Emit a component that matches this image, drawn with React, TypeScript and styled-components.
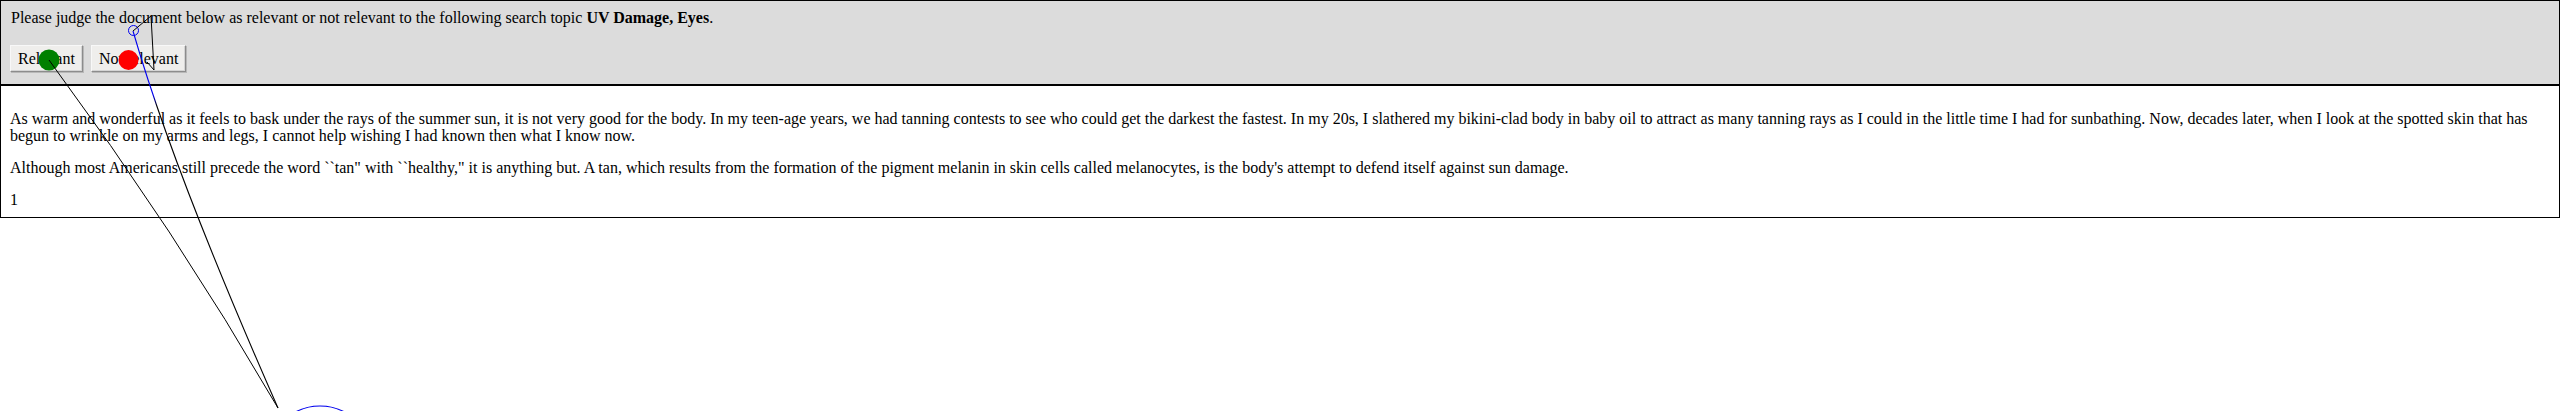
import React from "react";
import styled, { createGlobalStyle } from "styled-components";

const GlobalStyle = createGlobalStyle`
  html {
    overflow: hidden;
  }
  html, body {
    margin: 0;
    padding: 0;
    background: #ffffff;
  }
  body {
    font-family: "Liberation Serif", "Times New Roman", serif;
    font-size: 16px;
    color: #000000;
  }
`;

const Page = styled.div`
  position: relative;
  width: 100%;
  min-height: 411px;
`;

const JudgePanel = styled.section`
  display: flex;
  flex-direction: column;
  gap: 18px;
  background: #dcdcdc;
  border: 1px solid #000000;
  padding: 8px 9px 12px;
`;

const Prompt = styled.div`
  line-height: 18px;
  padding-left: 1px;
`;

const ButtonRow = styled.div`
  display: flex;
  gap: 8px;
`;

const JudgeButton = styled.button`
  height: 27px;
  padding: 0 7px;
  font-family: "Liberation Serif", "Times New Roman", serif;
  font-size: 16px;
  color: #000000;
  background: #efeeec;
  border: 1px solid;
  border-color: #f8f8f8 #8c8c8c #8c8c8c #f8f8f8;
  box-shadow: 1px 1px 0 #b8b8b8, inset -1px -1px 0 #d4d4d4;
  border-radius: 0;
  cursor: pointer;
`;

const DocumentBox = styled.article`
  display: flex;
  flex-direction: column;
  gap: 15px;
  border: 1px solid #000000;
  padding: 24px 9px 9px;
`;

const Paragraph = styled.p`
  margin: 0;
  line-height: 17px;
`;

const GazeOverlay = styled.svg`
  position: absolute;
  left: 0;
  top: 0;
  width: 2560px;
  height: 411px;
  overflow: hidden;
  pointer-events: none;
`;

const App: React.FC = () => (
  <>
    <GlobalStyle />
    <Page>
      <JudgePanel>
        <Prompt>
          Please judge the document below as relevant or not relevant to the
          following search topic <b>UV Damage, Eyes</b>.
        </Prompt>
        <ButtonRow>
          <JudgeButton>Relevant</JudgeButton>
          <JudgeButton>Not relevant</JudgeButton>
        </ButtonRow>
      </JudgePanel>
      <DocumentBox>
        <Paragraph>
          As warm and wonderful as it feels to bask under the rays of the
          summer sun, it is not very good for the body. In my teen-age years,
          we had tanning contests to see who could get the darkest the
          fastest. In my 20s, I slathered my bikini-clad body in baby oil to
          attract as many tanning rays as I could in the little time I had for
          sunbathing. Now, decades later, when I look at the spotted skin that
          has begun to wrinkle on my arms and legs, I cannot help wishing I had
          known then what I know now.
        </Paragraph>
        <Paragraph>
          Although most Americans still precede the word ``tan" with
          ``healthy," it is anything but. A tan, which results from the
          formation of the pigment melanin in skin cells called melanocytes, is
          the body's attempt to defend itself against sun damage.
        </Paragraph>
        <Paragraph>1</Paragraph>
      </DocumentBox>
      <GazeOverlay viewBox="0 0 2560 411">
        <defs>
          <linearGradient
            id="saccadeFade"
            gradientUnits="userSpaceOnUse"
            x1="0"
            y1="31"
            x2="0"
            y2="408"
          >
            <stop offset="0" stopColor="#0000ee" />
            <stop offset="0.17" stopColor="#0000ee" />
            <stop offset="0.2" stopColor="#000000" />
            <stop offset="1" stopColor="#000000" />
          </linearGradient>
        </defs>
        <circle cx="49" cy="60" r="10.5" fill="#008000" />
        <circle cx="128.5" cy="60" r="10" fill="#ff0000" />
        <circle cx="133.5" cy="30.5" r="5" fill="none" stroke="#0000ee" strokeWidth="1" />
        <circle cx="320" cy="458" r="52" fill="none" stroke="#0000ee" strokeWidth="1.2" />
        <path d="M 49 60 Q 175 230 278 408" fill="none" stroke="#000000" strokeWidth="1" />
        <path d="M 133 31 Q 173 170 278 408" fill="none" stroke="url(#saccadeFade)" strokeWidth="1.1" />
        <path d="M 133 31 L 151 16 L 154 70 L 147 62" fill="none" stroke="#000000" strokeWidth="1" />
      </GazeOverlay>
    </Page>
  </>
);

export default App;
